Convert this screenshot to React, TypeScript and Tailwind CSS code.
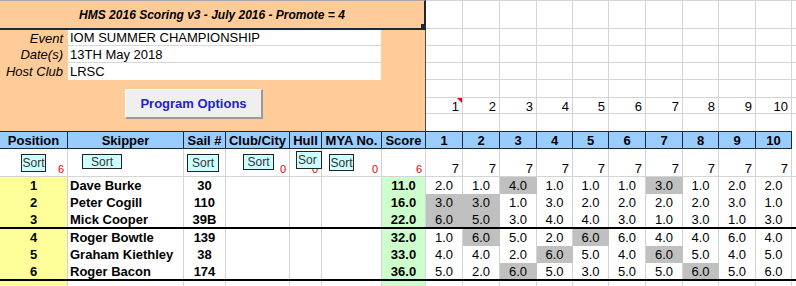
import React from "react";

const GRID =
  "grid grid-cols-[68px_116px_42px_64px_32px_60px_44px_37px_37px_37px_36px_36px_37px_37px_36px_37px_36px_4px]";
const RACE_GRID =
  "grid grid-cols-[37px_37px_37px_36px_36px_37px_37px_36px_37px_36px_4px]";

type Result = {
  pos: number;
  skipper: string;
  sail: string;
  score: string;
  races: string[];
  dropped: number[];
};

const results: Result[] = [
  { pos: 1, skipper: "Dave Burke", sail: "30", score: "11.0", races: ["2.0", "1.0", "4.0", "1.0", "1.0", "1.0", "3.0", "1.0", "2.0", "2.0"], dropped: [2, 6] },
  { pos: 2, skipper: "Peter Cogill", sail: "110", score: "16.0", races: ["3.0", "3.0", "1.0", "3.0", "2.0", "2.0", "2.0", "2.0", "3.0", "1.0"], dropped: [0, 1] },
  { pos: 3, skipper: "Mick Cooper", sail: "39B", score: "22.0", races: ["6.0", "5.0", "3.0", "4.0", "4.0", "3.0", "1.0", "3.0", "1.0", "3.0"], dropped: [0, 1] },
  { pos: 4, skipper: "Roger Bowtle", sail: "139", score: "32.0", races: ["1.0", "6.0", "5.0", "2.0", "6.0", "6.0", "4.0", "4.0", "6.0", "4.0"], dropped: [1, 4] },
  { pos: 5, skipper: "Graham Kiethley", sail: "38", score: "33.0", races: ["4.0", "4.0", "2.0", "6.0", "5.0", "4.0", "6.0", "5.0", "4.0", "5.0"], dropped: [3, 6] },
  { pos: 6, skipper: "Roger Bacon", sail: "174", score: "36.0", races: ["5.0", "2.0", "6.0", "5.0", "3.0", "5.0", "5.0", "6.0", "5.0", "6.0"], dropped: [2, 7] },
];

const raceNumbers = [1, 2, 3, 4, 5, 6, 7, 8, 9, 10];
const topRowHeights = ["h-[29px] border-t", "h-[17px]", "h-[17px]", "h-[17px]", "h-[18px]", "h-[16px]", "h-[17px]"];

function SortButton({ className, label = "Sort" }: { className: string; label?: string }) {
  return (
    <div
      className={`absolute z-10 flex items-center overflow-hidden border border-[#222] bg-[#ccffff] text-[12px] leading-none text-[#333] ${className}`}
    >
      {label}
    </div>
  );
}

function SortCell({ children, count }: { children?: React.ReactNode; count?: string }) {
  return (
    <div className="relative flex items-end justify-end border-r border-[#d4d4d4] pb-[1px] pr-[3px] text-[11px] leading-none text-[#e00000]">
      {children}
      {count}
    </div>
  );
}

function ResultRow({ r, heavy }: { r: Result; heavy: boolean }) {
  return (
    <div className={`${GRID} ${heavy ? "h-[18px] border-b-2 border-black" : "h-[17px]"} text-[13px] leading-none`}>
      <div className="flex items-center justify-center border-r border-[#d4d4d4] bg-[#ffff99] font-bold">{r.pos}</div>
      <div className="flex items-center border-r border-[#d4d4d4] pl-[2px] font-bold whitespace-nowrap">{r.skipper}</div>
      <div className="flex items-center justify-center border-r border-[#d4d4d4] font-bold">{r.sail}</div>
      <div className="border-r border-[#d4d4d4]" />
      <div className="border-r border-[#d4d4d4]" />
      <div className="border-r border-[#d4d4d4]" />
      <div className="flex items-center justify-center border-r border-[#d4d4d4] bg-[#ccffcc] font-bold">{r.score}</div>
      {r.races.map((v, i) => {
        const drop = r.dropped.includes(i);
        return (
          <div
            key={i}
            className={`flex items-center justify-center border-r ${drop ? "border-[#c0c0c0] bg-[#c0c0c0]" : "border-[#d4d4d4]"}`}
          >
            {v}
          </div>
        );
      })}
      <div />
    </div>
  );
}

export default function App() {
  return (
    <div className="h-[286px] w-[796px] overflow-hidden bg-white font-['Liberation_Sans',Arial,sans-serif] text-black">
      {/* top block: event panel + race numbers */}
      <div className="flex h-[131px]">
        <div className="flex w-[426px] flex-col bg-[#ffcc99]">
          <div className="relative flex h-[30px] items-center justify-center border-t border-r-2 border-b-2 border-t-[#a6a6a6] border-r-[#1c2833] border-b-[#1c2833] text-[12px] font-bold italic">
            HMS 2016 Scoring v3 - July 2016 - Promote = 4
            <div className="absolute -right-[2px] -bottom-[1px] z-20 h-[5px] w-[5px] bg-[#1c2833]" />
          </div>
          <div className="flex-1 border-r border-r-[#4a4a4a]">
            <div className="grid grid-cols-[68px_313px] text-[13px] leading-none">
              <div className="flex h-[16px] items-center justify-end pr-[5px] italic">Event</div>
              <div className="flex h-[16px] items-center border-b border-[#d8d8d8] bg-white pl-[2px]">IOM SUMMER CHAMPIONSHIP</div>
              <div className="flex h-[17px] items-center justify-end pr-[5px] italic">Date(s)</div>
              <div className="flex h-[17px] items-center border-b border-[#d8d8d8] bg-white pl-[2px]">13TH May 2018</div>
              <div className="flex h-[17px] items-center justify-end pr-[5px] italic">Host Club</div>
              <div className="flex h-[17px] items-center bg-white pl-[2px]">LRSC</div>
            </div>
            <div className="mt-[9px] ml-[125px] flex h-[30px] w-[138px] items-center justify-center border-t border-l border-r-2 border-b-2 border-t-white border-l-white border-r-[#9a9a9a] border-b-[#9a9a9a] bg-[#efefef] text-[13px] font-bold text-[#2222cc]">
              Program Options
            </div>
          </div>
        </div>
        <div className="w-[370px]">
          {topRowHeights.map((h, row) => (
            <div key={row} className={`${RACE_GRID} ${h} ${row < 6 ? "border-b" : ""} border-[#d4d4d4]`}>
              {raceNumbers.map((n) => (
                <div
                  key={n}
                  className="relative flex items-end justify-end border-r border-[#d4d4d4] pr-[3px] text-[13px] leading-none"
                >
                  {row === 5 ? n : null}
                  {row === 5 && n === 1 ? (
                    <div className="absolute top-0 right-0 h-0 w-0 border-t-[5px] border-l-[5px] border-t-[#e00000] border-l-transparent" />
                  ) : null}
                </div>
              ))}
              <div />
            </div>
          ))}
        </div>
      </div>

      {/* column header */}
      <div className={`${GRID} h-[18px] text-[13px] font-bold leading-none`}>
        {["Position", "Skipper", "Sail #", "Club/City", "Hull", "MYA No.", "Score", ...raceNumbers.map(String)].map((h) => (
          <div
            key={h}
            className="flex items-center justify-center border-y border-r border-[#1c2833] bg-[#99ccff] whitespace-nowrap"
          >
            {h}
          </div>
        ))}
        <div />
      </div>

      {/* sort row */}
      <div className={`${GRID} h-[28px] border-b border-[#d4d4d4]`}>
        <SortCell count="6">
          <SortButton className="top-[5px] left-[21px] h-[18px] w-[25px] justify-center" />
        </SortCell>
        <SortCell>
          <SortButton className="top-[5px] left-[14px] h-[15px] w-[40px] justify-center" />
        </SortCell>
        <SortCell>
          <SortButton className="top-[5px] left-[3px] h-[18px] w-[32px] justify-center" />
        </SortCell>
        <SortCell count="0">
          <SortButton className="top-[5px] left-[17px] h-[16px] w-[31px] justify-center" />
        </SortCell>
        <SortCell count="0">
          <SortButton className="top-[2px] left-[6px] h-[18px] w-[26px] pl-[1px]" label="Sor" />
        </SortCell>
        <SortCell count="0">
          <SortButton className="top-[5px] left-[7px] h-[17px] w-[25px] justify-center" />
        </SortCell>
        <SortCell count="6" />
        {raceNumbers.map((n) => (
          <div
            key={n}
            className="flex items-end justify-end border-r border-[#d4d4d4] pb-[1px] pr-[3px] text-[13px] leading-none"
          >
            7
          </div>
        ))}
        <div />
      </div>

      {/* results */}
      {results.map((r, i) => (
        <ResultRow key={r.pos} r={r} heavy={i === 2 || i === 5} />
      ))}

      {/* next empty row */}
      <div className={`${GRID} h-[17px]`}>
        <div className="border-r border-[#d4d4d4] bg-[#ffff99]" />
        <div className="border-r border-[#d4d4d4]" />
        <div className="border-r border-[#d4d4d4]" />
        <div className="border-r border-[#d4d4d4]" />
        <div className="border-r border-[#d4d4d4]" />
        <div className="border-r border-[#d4d4d4]" />
        <div className="border-r border-[#d4d4d4] bg-[#ccffcc]" />
        {raceNumbers.map((n) => (
          <div key={n} className="border-r border-[#d4d4d4]" />
        ))}
        <div />
      </div>
    </div>
  );
}
